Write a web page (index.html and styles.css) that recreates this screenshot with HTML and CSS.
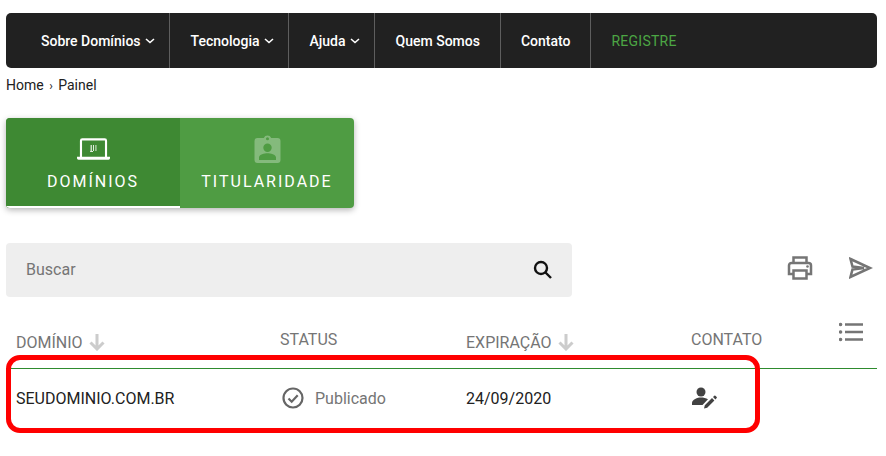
FILE: index.html
```html
<!DOCTYPE html>
<html lang="pt-BR">
<head>
  <meta charset="UTF-8">
  <title>Painel</title>
  <link rel="stylesheet" href="styles.css">
</head>
<body>
  <!-- Top menu -->
  <nav class="menu">
    <a class="menu-item has-sub first">Sobre Domínios <svg class="chev" viewBox="0 0 10 6"><path d="M1 1l4 3.5L9 1"/></svg></a>
    <a class="menu-item has-sub">Tecnologia <svg class="chev" viewBox="0 0 10 6"><path d="M1 1l4 3.5L9 1"/></svg></a>
    <a class="menu-item has-sub">Ajuda <svg class="chev" viewBox="0 0 10 6"><path d="M1 1l4 3.5L9 1"/></svg></a>
    <a class="menu-item after-sub">Quem Somos</a>
    <a class="menu-item">Contato</a>
    <a class="menu-item register">REGISTRE</a>
  </nav>

  <div class="breadcrumb">Home <span class="sep">›</span> Painel</div>

  <!-- Tabs -->
  <div class="tabs">
    <div class="tab active">
      <svg class="tab-icon" viewBox="0 -1 34 24">
        <path fill="#fff" fill-rule="evenodd" d="M3 2.500A2.500 2.500 0 0 1 5.500 0h23A2.500 2.500 0 0 1 31 2.500V19h3v1.500a1.500 1.500 0 0 1-1.500 1.500h-31A1.500 1.500 0 0 1 0 20.500V19h3zM5.200 2.200V19h23.600V2.200z"/>
        <path fill="#fff" opacity=".85" d="M14 7h1.300v6H14zM16.500 7h1v6h-1zM19 7h1v6h-1zM13.500 13h3v1h-3z"/>
      </svg>
      <span>DOMÍNIOS</span>
    </div>
    <div class="tab">
      <svg class="tab-icon faded" viewBox="0 0 26 28">
        <path fill="#fff" fill-rule="evenodd" d="M3 3h6.300a4 4 0 0 1 7.400 0H23a3 3 0 0 1 3 3v19a3 3 0 0 1-3 3H3a3 3 0 0 1-3-3V6a3 3 0 0 1 3-3zM13 2.300a1.500 1.500 0 1 0 0 3 1.500 1.500 0 0 0 0-3zM13 8.500a4.200 4.200 0 1 0 0 8.400 4.200 4.200 0 0 0 0-8.400zM4.500 25h17v-2.500c0-3-5.600-4.300-8.500-4.300s-8.500 1.300-8.500 4.300z"/>
      </svg>
      <span>TITULARIDADE</span>
    </div>
  </div>

  <!-- Search and actions -->
  <div class="toolbar">
    <div class="search">
      <span class="search-text">Buscar</span>
      <svg class="search-icon" viewBox="0 0 20 20"><circle cx="8" cy="8" r="6"/><path d="M12.500 12.500L18 18"/></svg>
    </div>
    <div class="actions">
      <svg class="print" viewBox="0 0 26 24"><path d="M6.500 7V1.500h13V7M6.500 18H2V9.500A2.500 2.500 0 0 1 4.500 7h17A2.500 2.500 0 0 1 24 9.500V18h-4.500M6.500 14.500h13v8h-13z"/><circle class="dot" cx="20.500" cy="10.500" r="1.300"/></svg>
      <svg class="send" viewBox="0 0 24 22"><path d="M1.500 2L21 11 1.500 20l2-7.500L15 11 3.500 9.500z"/></svg>
    </div>
  </div>

  <!-- Domain table -->
  <div class="table">
    <div class="table-head">
      <div class="th sortable">DOMÍNIO <svg class="arrow" viewBox="0 0 16 17"><path d="M8 0v15M1.500 8.500L8 15l6.500-6.500"/></svg></div>
      <div class="th">STATUS</div>
      <div class="th sortable">EXPIRAÇÃO <svg class="arrow" viewBox="0 0 16 17"><path d="M8 0v15M1.500 8.500L8 15l6.500-6.500"/></svg></div>
      <div class="th">CONTATO</div>
      <svg class="list-icon" viewBox="0 0 24 20"><path d="M6 2.500h18M6 10h18M6 17.500h18"/><path class="dots" d="M1.500 2.500h.1M1.500 10h.1M1.500 17.500h.1"/></svg>
    </div>
    <div class="table-row">
      <div class="td">SEUDOMINIO.COM.BR</div>
      <div class="td status">
        <svg class="check" viewBox="0 0 22 22"><circle cx="11" cy="11" r="9.500"/><path d="M6.500 11.500l3.200 3.200 6-6.500"/></svg>
        Publicado
      </div>
      <div class="td">24/09/2020</div>
      <div class="td">
        <svg class="edit" viewBox="0 0 26 22"><circle cx="9" cy="5" r="4.500"/><path d="M0 18v-2c0-3.500 5.500-5.500 9-5.500 2.500 0 5 .6 7 1.700L10.500 18zM12 21.500l.8-3.200 7.200-7.200 2.400 2.400-7.200 7.200zM21 10l1.300-1.300a.8.8 0 0 1 1.100 0l1.300 1.300a.8.8 0 0 1 0 1.100l-1.300 1.300z"/></svg>
      </div>
    </div>
    <!-- Red highlight drawn over the row -->
    <div class="highlight"></div>
  </div>
</body>
</html>
```

FILE: styles.css
```css
html, body {
  height: 100%;
}
body {
  margin: 0;
  padding: 13px 9px 0 6px;
  box-sizing: border-box;
  background: #fff;
  font-family: Roboto, Arial, sans-serif;
  color: #212121;
}

/* Menu */
.menu {
  display: flex;
  height: 55px;
  background: #212121;
  border-radius: 5px;
}
.menu-item {
  display: flex;
  align-items: center;
  gap: 5px;
  padding: 0 20px;
  border-right: 1px solid #5e5e5e;
  color: #fff;
  font-size: 14px;
  font-weight: 500;
}
.menu-item.has-sub {
  gap: 4px;
  padding: 0 14px 0 21px;
}
.menu-item.after-sub {
  padding-left: 21px;
}
.menu-item.first {
  padding-left: 35px;
}
.menu-item.register {
  border-right: 0;
  color: #4ca644;
  font-weight: 400;
  letter-spacing: 0.25px;
}
.chev {
  width: 10px;
  height: 6px;
  fill: none;
  stroke: #fff;
  stroke-width: 1.6;
}

.breadcrumb {
  margin-top: 9px;
  font-size: 14px;
  line-height: 17px;
}
.sep {
  margin: 0 2px;
  font-size: 12px;
}

/* Tabs */
.tabs {
  display: flex;
  width: 348px;
  height: 90px;
  margin-top: 23px;
  background: #4f9c43;
  border-radius: 4px;
  box-shadow: 0 2px 6px rgba(0,0,0,0.3);
  overflow: hidden;
}
.tab {
  display: flex;
  flex-direction: column;
  align-items: center;
  width: 174px;
  padding-top: 17px;
  box-sizing: border-box;
  color: #fff;
  font-size: 16px;
  letter-spacing: 2px;
}
.tab.active {
  background: #3e8933;
  border-bottom: 2px solid #fff;
}
.tab-icon {
  width: 33px;
  height: 28px;
  margin-bottom: 9px;
}
.tab-icon.faded {
  opacity: 0.3;
}

/* Toolbar */
.toolbar {
  display: flex;
  justify-content: space-between;
  align-items: center;
  margin-top: 35px;
}
.search {
  display: flex;
  justify-content: space-between;
  align-items: center;
  width: 566px;
  height: 54px;
  padding: 0 19px 0 20px;
  box-sizing: border-box;
  background: #eee;
  border-radius: 4px;
}
.search-text {
  margin-bottom: 2px;
  color: #757575;
  font-size: 16px;
}
.search-icon {
  width: 20px;
  height: 20px;
  fill: none;
  stroke: #111;
  stroke-width: 2.400;
}
.actions {
  display: flex;
  align-items: center;
  gap: 36px;
  padding: 0 4px 4px 0;
}
.print {
  width: 26px;
  height: 24px;
  fill: none;
  stroke: #757575;
  stroke-width: 2.500;
}
.print .dot {
  fill: #757575;
  stroke: none;
}
.send {
  width: 24px;
  height: 22px;
  fill: none;
  stroke: #757575;
  stroke-width: 2.500;
}

/* Table */
.table {
  position: relative;
  margin-top: 25px;
}
.table-head {
  display: grid;
  grid-template-columns: 264px 186px 225px 1fr auto;
  align-items: start;
  height: 46px;
  padding-left: 10px;
  border-bottom: 1px solid #2e8b2e;
}
.th {
  display: flex;
  align-items: center;
  gap: 6px;
  margin-top: 8px;
  color: #757575;
  font-size: 16px;
  line-height: 19px;
}
.th.sortable {
  margin-top: 11px;
}
.arrow {
  width: 16px;
  height: 17px;
  fill: none;
  stroke: #ccc;
  stroke-width: 3;
}
.list-icon {
  width: 24px;
  height: 20px;
  margin-right: 14px;
  fill: none;
  stroke: #757575;
  stroke-width: 2.500;
}
.list-icon .dots {
  stroke-width: 3.500;
  stroke-linecap: round;
}
.table-row {
  display: grid;
  grid-template-columns: 254px 196px 225px 1fr;
  align-items: center;
  height: 58px;
  padding-left: 10px;
}
.td {
  display: flex;
  align-items: center;
  font-size: 16px;
}
.td.status {
  gap: 11px;
  padding-left: 12px;
  color: #757575;
}
.check {
  width: 22px;
  height: 22px;
  fill: none;
  stroke: #666;
  stroke-width: 2.200;
}
.edit {
  width: 26px;
  height: 22px;
  margin-left: 1px;
  fill: #424242;
}
.highlight {
  position: absolute;
  left: 0;
  top: 33px;
  width: 754px;
  height: 78px;
  box-sizing: border-box;
  border: 5px solid #f00;
  border-radius: 14px;
}
```
